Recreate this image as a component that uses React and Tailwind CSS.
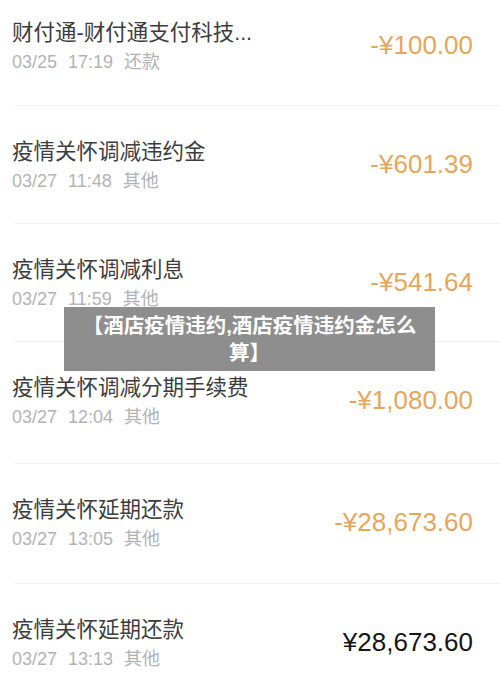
const rows = [
  { title: "财付通-财付通支付科技...", date: "03/25", time: "17:19", kind: "还款", amount: "-¥100.00", neg: true, h: "h-[119px]" },
  { title: "疫情关怀调减违约金", date: "03/27", time: "11:48", kind: "其他", amount: "-¥601.39", neg: true, h: "h-[118px]" },
  { title: "疫情关怀调减利息", date: "03/27", time: "11:59", kind: "其他", amount: "-¥541.64", neg: true, h: "h-[118px]" },
  { title: "疫情关怀调减分期手续费", date: "03/27", time: "12:04", kind: "其他", amount: "-¥1,080.00", neg: true, h: "h-[122px]" },
  { title: "疫情关怀延期还款", date: "03/27", time: "13:05", kind: "其他", amount: "-¥28,673.60", neg: true, h: "h-[120px]" },
  { title: "疫情关怀延期还款", date: "03/27", time: "13:13", kind: "其他", amount: "¥28,673.60", neg: false, h: "h-[119px]" },
];

export default function App() {
  return (
    <div
      className="relative h-[680px] w-[500px] overflow-hidden bg-white"
      style={{ fontFamily: '"Liberation Sans", "Noto Sans CJK SC", sans-serif' }}
    >
      <ul className="-mt-[13px]">
        {rows.map((r, i) => (
          <li key={i} className={`flex flex-col ${r.h}`}>
            <div className="flex flex-1 items-start justify-between pl-[12px] pr-[27px] pt-[32px]">
              <div>
                <div className="text-[21.5px] leading-[28px] text-[#3d3d3d]">{r.title}</div>
                <div className="mt-[3px] flex gap-[11px] text-[18px] leading-[24px] text-[#b3b3b3]">
                  <span>{r.date}</span>
                  <span>{r.time}</span>
                  <span>{r.kind}</span>
                </div>
              </div>
              <div
                className={`mt-[11px] text-[26px] leading-[30px] ${r.neg ? "text-[#e6a65c]" : "text-[#151515]"}`}
              >
                {r.amount}
              </div>
            </div>
            <div className="ml-[15px] h-px bg-[#f0f0f0]" />
          </li>
        ))}
      </ul>

      <div className="absolute left-[64px] top-[307px] flex h-[64px] w-[371px] items-center justify-center bg-[#8e8e8e] px-[15px]">
        <p className="text-center text-[20.5px] font-bold leading-[27px] text-white">
          【酒店疫情违约,酒店疫情违约金怎么算】
        </p>
      </div>
    </div>
  );
}
